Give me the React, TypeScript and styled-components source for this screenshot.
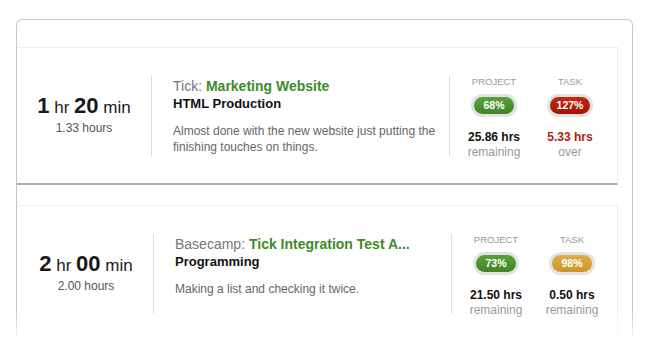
import React from "react";
import styled, { createGlobalStyle } from "styled-components";

const GlobalStyle = createGlobalStyle`
  html, body {
    margin: 0;
    padding: 0;
    background: #fff;
  }
  body {
    font-family: "Liberation Sans", Arial, Helvetica, sans-serif;
    color: #111;
  }
`;

const Page = styled.div`
  position: relative;
  width: 650px;
  height: 358px;
  overflow: hidden;
  padding: 19px 0 0 16px;
  box-sizing: border-box;
`;

const Frame = styled.div`
  width: 617px;
  height: 400px;
  box-sizing: border-box;
  border: 1px solid #c6c6c6;
  border-bottom: none;
  border-radius: 6px 6px 0 0;
  padding: 27px 14px 0 0;
  display: flex;
  flex-direction: column;
  gap: 20px;
`;

// white fade over the bottom edge of the frame
const Fade = styled.div`
  position: absolute;
  left: 0;
  right: 0;
  bottom: 0;
  height: 46px;
  background: linear-gradient(to bottom, rgba(255, 255, 255, 0), #fff 62%);
  pointer-events: none;
`;

const Card = styled.div<{ $indent?: number }>`
  display: grid;
  grid-template-columns: 134px 298px 1fr;
  align-items: center;
  height: 135px;
  margin-left: ${(p) => p.$indent ?? 0}px;
  border-top: 1px solid #ededed;
  border-right: 1px solid #ededed;
  border-bottom: 2px solid #adadad;
`;

const TimeCol = styled.div`
  text-align: center;
  margin-top: -4px;
`;

const Duration = styled.div`
  font-size: 17px;
  line-height: 26px;
  color: #1a1a1a;
  b {
    font-size: 22px;
    font-weight: bold;
  }
`;

const Hours = styled.div`
  font-size: 12px;
  line-height: 14px;
  color: #555;
`;

const InfoCol = styled.div`
  height: 80px;
  box-sizing: border-box;
  border-left: 1px solid #dcdcdc;
  padding: 1px 0 0 21px;
`;

const Title = styled.div`
  font-size: 14px;
  line-height: 18px;
  color: #777;
  white-space: nowrap;
  b {
    color: #3d8b28;
    font-weight: bold;
  }
`;

const Task = styled.div`
  font-size: 13px;
  line-height: 18px;
  font-weight: bold;
  color: #111;
`;

const Note = styled.div`
  margin-top: 10px;
  font-size: 12px;
  line-height: 16px;
  color: #666;
`;

const StatsCol = styled.div`
  height: 80px;
  box-sizing: border-box;
  border-left: 1px solid #dcdcdc;
  padding-left: 6px;
  display: grid;
  grid-template-columns: 76px 76px;
`;

const Stat = styled.div`
  display: flex;
  flex-direction: column;
  align-items: center;
`;

const Label = styled.div`
  font-size: 9.5px;
  line-height: 12px;
  color: #999;
  text-transform: uppercase;
`;

const badgeColors = {
  green: ["#5aa03c", "#3f8526"],
  red: ["#c42814", "#a31404"],
  gold: ["#dcaf48", "#c9952a"],
};

const Badge = styled.div<{ $tone: keyof typeof badgeColors }>`
  margin-top: 6px;
  width: 40px;
  height: 17px;
  border-radius: 12px;
  border: 3px solid #e2e2e2;
  background: linear-gradient(
    to bottom,
    ${(p) => badgeColors[p.$tone][0]},
    ${(p) => badgeColors[p.$tone][1]}
  );
  color: #fff;
  font-size: 10.5px;
  font-weight: bold;
  line-height: 17px;
  text-align: center;
`;

const Amount = styled.div<{ $over?: boolean }>`
  margin-top: 13px;
  font-size: 12px;
  line-height: 15px;
  font-weight: bold;
  color: ${(p) => (p.$over ? "#b3200f" : "#111")};
`;

const Caption = styled.div`
  font-size: 12px;
  line-height: 14px;
  color: #999;
`;

type StatData = {
  label: string;
  pct: string;
  tone: keyof typeof badgeColors;
  amount: string;
  caption: string;
  over?: boolean;
};

type Entry = {
  hr: string;
  min: string;
  hours: string;
  source: string;
  project: string;
  task: string;
  note: string[];
  stats: StatData[];
  indent?: number;
};

const entries: Entry[] = [
  {
    hr: "1",
    min: "20",
    hours: "1.33 hours",
    source: "Tick:",
    project: "Marketing Website",
    task: "HTML Production",
    note: [
      "Almost done with the new website just putting the",
      "finishing touches on things.",
    ],
    stats: [
      { label: "Project", pct: "68%", tone: "green", amount: "25.86 hrs", caption: "remaining" },
      { label: "Task", pct: "127%", tone: "red", amount: "5.33 hrs", caption: "over", over: true },
    ],
  },
  {
    hr: "2",
    min: "00",
    hours: "2.00 hours",
    source: "Basecamp:",
    project: "Tick Integration Test A...",
    task: "Programming",
    note: ["Making a list and checking it twice."],
    stats: [
      { label: "Project", pct: "73%", tone: "green", amount: "21.50 hrs", caption: "remaining" },
      { label: "Task", pct: "98%", tone: "gold", amount: "0.50 hrs", caption: "remaining" },
    ],
    indent: 2,
  },
];

function EntryCard({ entry }: { entry: Entry }) {
  return (
    <Card $indent={entry.indent}>
      <TimeCol>
        <Duration>
          <b>{entry.hr}</b> hr <b>{entry.min}</b> min
        </Duration>
        <Hours>{entry.hours}</Hours>
      </TimeCol>
      <InfoCol>
        <Title>
          {entry.source} <b>{entry.project}</b>
        </Title>
        <Task>{entry.task}</Task>
        <Note>
          {entry.note.map((line) => (
            <div key={line}>{line}</div>
          ))}
        </Note>
      </InfoCol>
      <StatsCol>
        {entry.stats.map((s) => (
          <Stat key={s.label}>
            <Label>{s.label}</Label>
            <Badge $tone={s.tone}>{s.pct}</Badge>
            <Amount $over={s.over}>{s.amount}</Amount>
            <Caption>{s.caption}</Caption>
          </Stat>
        ))}
      </StatsCol>
    </Card>
  );
}

export default function App() {
  return (
    <>
      <GlobalStyle />
      <Page>
        <Frame>
          {entries.map((e) => (
            <EntryCard key={e.project} entry={e} />
          ))}
        </Frame>
        <Fade />
      </Page>
    </>
  );
}
